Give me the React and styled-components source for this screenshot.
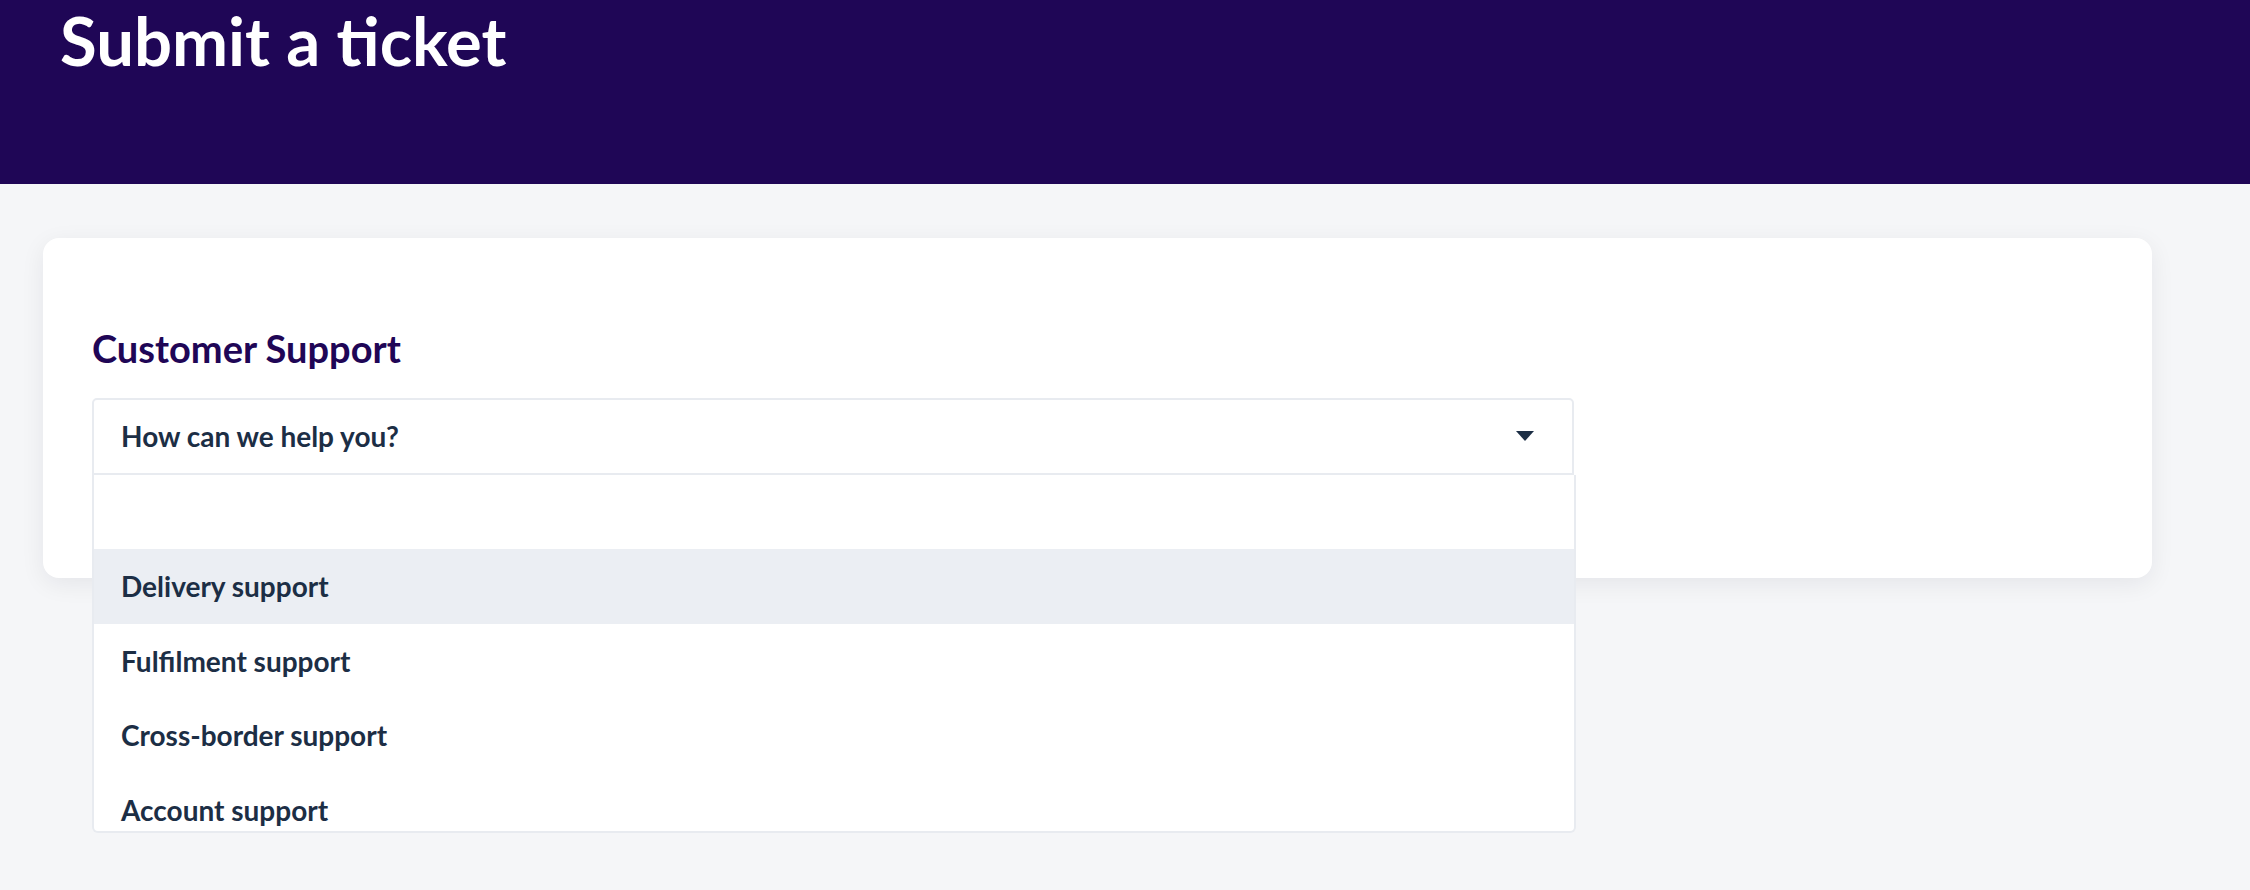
import React from "react";
import styled, { createGlobalStyle } from "styled-components";

const GlobalStyle = createGlobalStyle`
  html, body {
    margin: 0;
    padding: 0;
    background: #f5f6f8;
    font-family: "Lato", "Open Sans", sans-serif;
  }
  html, body, #root {
    min-height: 100%;
  }
`;

const Header = styled.header`
  height: 184px;
  background: #1f0656;
  padding-left: 60px;
  box-sizing: border-box;
`;

const Title = styled.h1`
  margin: 0;
  color: #ffffff;
  font-size: 67px;
  font-weight: 700;
  line-height: 1.2;
`;

const Main = styled.main`
  min-height: 706px;
  box-sizing: border-box;
  padding: 54px 0 0 43px;
`;

const Card = styled.section`
  width: 2109px;
  box-sizing: border-box;
  background: #ffffff;
  border-radius: 16px;
  box-shadow: 0 6px 24px rgba(20, 20, 40, 0.07);
  padding: 88px 49px 103px;
`;

const Heading = styled.h2`
  margin: 0 0 26px;
  color: #1f0656;
  font-size: 38px;
  font-weight: 700;
  line-height: 1.2;
`;

const SelectWrap = styled.div`
  position: relative;
  z-index: 2;
  width: 1482px;
`;

const SelectBox = styled.div`
  height: 77px;
  box-sizing: border-box;
  border: 2px solid #e8ebf0;
  border-radius: 5px 5px 0 0;
  display: flex;
  align-items: center;
  justify-content: space-between;
  padding: 0 38px 0 27px;
  color: #1c2e45;
  font-size: 28px;
  font-weight: 700;
`;

const Caret = styled.span`
  width: 0;
  height: 0;
  border-left: 9px solid transparent;
  border-right: 9px solid transparent;
  border-top: 10px solid #1c2e45;
`;

const Menu = styled.ul`
  position: absolute;
  top: 100%;
  left: 0;
  right: -2px;
  height: 358px;
  overflow: hidden;
  margin: 0;
  padding: 0;
  list-style: none;
  box-sizing: border-box;
  background: #ffffff;
  border: 2px solid #e8ebf0;
  border-top: none;
  border-radius: 0 0 6px 6px;
`;

const Option = styled.li`
  height: 74.5px;
  display: flex;
  align-items: center;
  padding-left: 27px;
  color: #1c2e45;
  font-size: 28px;
  font-weight: 700;
  background: ${(p) => (p.$active ? "#ebeef3" : "transparent")};
`;

const options = [
  "",
  "Delivery support",
  "Fulfilment support",
  "Cross-border support",
  "Account support",
];

export default function App() {
  return (
    <>
      <GlobalStyle />
      <Header>
        <Title>Submit a ticket</Title>
      </Header>
      <Main>
        <Card>
          <Heading>Customer Support</Heading>
          <SelectWrap>
            <SelectBox>
              How can we help you?
              <Caret />
            </SelectBox>
            <Menu>
              {options.map((o, i) => (
                <Option key={i} $active={o === "Delivery support"}>
                  {o}
                </Option>
              ))}
            </Menu>
          </SelectWrap>
        </Card>
      </Main>
    </>
  );
}
